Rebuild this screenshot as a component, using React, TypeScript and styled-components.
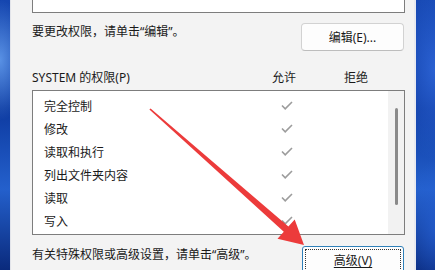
import styled, { createGlobalStyle } from 'styled-components';

const GlobalStyle = createGlobalStyle`
  html, body { margin: 0; padding: 0; }
  body {
    font-family: "Noto Sans", "Noto Sans CJK SC", sans-serif;
    background: #0b2f86;
  }
`;

const permissions = ['完全控制', '修改', '读取和执行', '列出文件夹内容', '读取', '写入'];

function Check() {
  return (
    <svg width="12" height="9" viewBox="0 0 12 9">
      <polyline points="1,4.5 4.2,7.8 11,1" fill="none" stroke="#9c9c9c" strokeWidth="1.6" />
    </svg>
  );
}

function Arrow() {
  return (
    <ArrowLayer width="435" height="270" viewBox="0 0 435 270">
      <polygon
        points="150.6,108.4 288.4,226.5 294.7,219.4 304,245 277.5,238.8 283.8,231.7 149.4,109.6"
        fill="#ec3b3b"
      />
    </ArrowLayer>
  );
}

function App() {
  return (
    <Desktop>
      <GlobalStyle />
      <Dialog>
        <GroupBox />
        <EditRow>
          <Hint>要更改权限，请单击“编辑”。</Hint>
          <Button>编辑(E)...</Button>
        </EditRow>
        <Header>
          <span>SYSTEM 的权限(P)</span>
          <ColTitle>允许</ColTitle>
          <ColTitle>拒绝</ColTitle>
        </Header>
        <ListBox>
          <Rows>
            {permissions.map((p) => (
              <Row key={p}>
                <span>{p}</span>
                <Cell>
                  <Check />
                </Cell>
                <Cell />
              </Row>
            ))}
          </Rows>
          <ScrollTrack>
            <Thumb />
          </ScrollTrack>
        </ListBox>
        <Footer>
          <Hint>有关特殊权限或高级设置，请单击“高级”。</Hint>
          <FocusButton>
            <u>高级(V)</u>
          </FocusButton>
        </Footer>
      </Dialog>
      <Arrow />
    </Desktop>
  );
}

const Desktop = styled.div`
  position: relative;
  width: 435px;
  height: 270px;
  overflow: hidden;
  display: flex;
  background:
    radial-gradient(ellipse 30px 60px at 0px 60px, rgba(120, 180, 255, 0.7), transparent),
    radial-gradient(ellipse 40px 90px at 435px 70px, rgba(60, 120, 240, 0.6), transparent),
    radial-gradient(ellipse 30px 70px at 435px 230px, rgba(40, 100, 220, 0.6), transparent),
    linear-gradient(180deg, #1546b0 0%, #0d3aa0 40%, #2460cc 70%, #0a2a7c 100%);
`;

const Dialog = styled.div`
  margin-left: 10px;
  width: 406px;
  height: 270px;
  box-sizing: border-box;
  padding-left: 21px;
  background: #f3f3f3;
  border-left: 1px solid #e2e4ea;
  border-right: 2px solid #e8eaf0;
  color: #1a1a1a;
  font-size: 12px;
`;

const GroupBox = styled.div`
  width: 373px;
  height: 13px;
  box-sizing: border-box;
  background: #fff;
  border: 1px solid #7d7d7d;
  border-top: none;
`;

const EditRow = styled.div`
  width: 373px;
  margin-top: 10px;
  display: flex;
  justify-content: space-between;
  align-items: flex-start;
`;

const Hint = styled.span`
  line-height: 16px;
  margin-top: 1px;
`;

const Button = styled.div`
  width: 103px;
  height: 28px;
  box-sizing: border-box;
  margin-right: 1px;
  display: flex;
  align-items: center;
  justify-content: center;
  background: #fdfdfd;
  border: 1px solid #d2d2d2;
  border-bottom-color: #bdbdbd;
  border-radius: 4px;
`;

const Header = styled.div`
  width: 373px;
  margin-top: 19px;
  display: grid;
  grid-template-columns: 1fr 72px 72px 13px;
  line-height: 16px;
`;

const ColTitle = styled.span`
  text-align: center;
`;

const ListBox = styled.div`
  width: 373px;
  height: 145px;
  box-sizing: border-box;
  margin-top: 4px;
  display: flex;
  background: #fff;
  border: 1px solid #7d7d7d;
`;

const Rows = styled.div`
  flex: 1;
  padding: 3px 0 0 11px;
`;

const Row = styled.div`
  height: 23px;
  display: grid;
  grid-template-columns: 1fr 72px 65px;
  align-items: center;
`;

const Cell = styled.span`
  display: flex;
  justify-content: center;
`;

const ScrollTrack = styled.div`
  width: 16px;
  background: #f2f2f2;
  display: flex;
  justify-content: center;
`;

const Thumb = styled.div`
  width: 3px;
  height: 97px;
  margin-top: 17px;
  border-radius: 2px;
  background: #8a8a8a;
`;

const Footer = styled.div`
  width: 373px;
  margin-top: 11px;
  display: flex;
  justify-content: space-between;
  align-items: flex-start;
`;

const FocusButton = styled(Button)`
  width: 102px;
  margin-right: 1px;
  border: 1px solid #2f7fb8;
  outline: 1px dotted #333;
  outline-offset: -4px;
  border-radius: 3px;
  u {
    text-decoration-thickness: 1px;
    text-underline-offset: 2px;
  }
`;

const ArrowLayer = styled.svg`
  position: absolute;
  left: 0;
  top: 0;
  pointer-events: none;
`;

export default App;
